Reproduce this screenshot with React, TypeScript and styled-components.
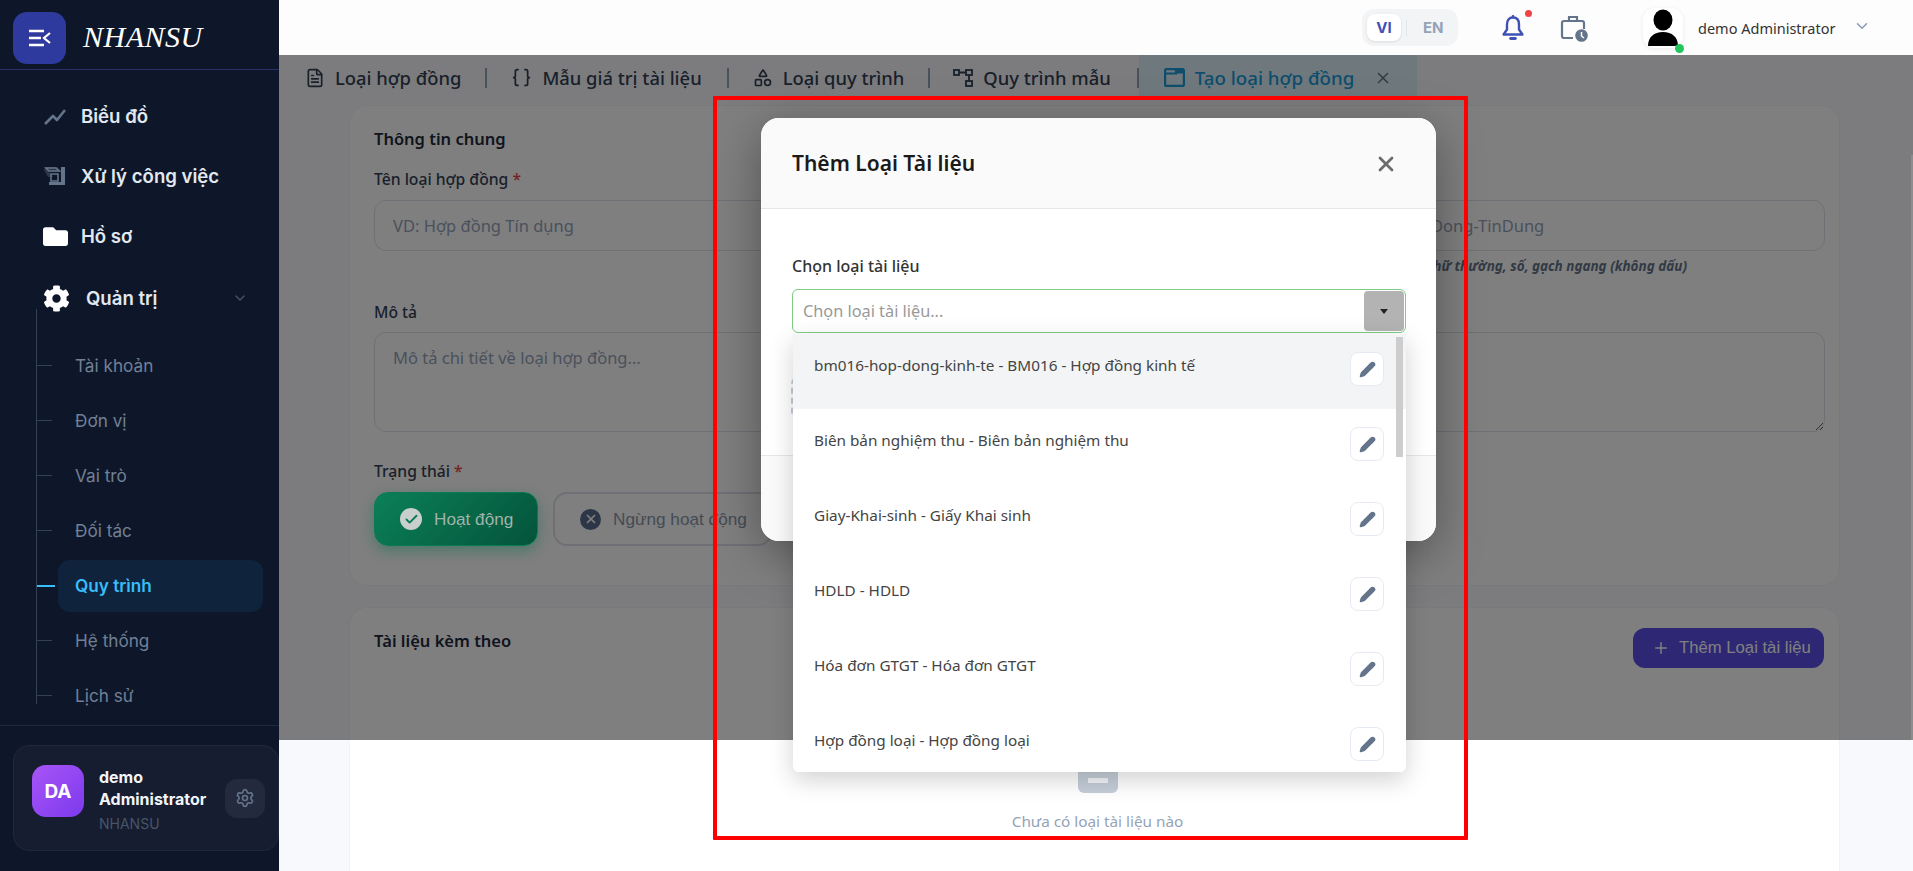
import styled, { createGlobalStyle } from "styled-components";
import { Braces, ChevronDown, FileText, Pencil, Plus, Settings, Shapes, X, Check } from "lucide-react";
import { FaCog, FaFolder } from "react-icons/fa";

const UI_FONT = `"Noto Sans", "Open Sans", sans-serif`;
const NAV_FONT = `Inter, "Noto Sans", sans-serif`;
const BTN_FONT = `"Liberation Sans", Arial, sans-serif`;

const GlobalStyle = createGlobalStyle`
  * { box-sizing: border-box; }
  html, body { margin: 0; padding: 0; height: 100%; overflow: hidden; }
  body { font-family: ${UI_FONT}; background: #f8f9fd; }
`;

const subItems = ["Tài khoản", "Đơn vị", "Vai trò", "Đối tác", "Quy trình", "Hệ thống", "Lịch sử"];

const docTypes = [
  "bm016-hop-dong-kinh-te - BM016 - Hợp đồng kinh tế",
  "Biên bản nghiệm thu - Biên bản nghiệm thu",
  "Giay-Khai-sinh - Giấy Khai sinh",
  "HDLD - HDLD",
  "Hóa đơn GTGT - Hóa đơn GTGT",
  "Hợp đồng loại - Hợp đồng loại",
];

const Shell = styled.div`
  display: flex;
  height: 871px;
  width: 1913px;
  overflow: hidden;
  position: relative;
`;

/* sidebar */
const Sidebar = styled.aside`
  width: 279px;
  flex: none;
  background: #0e1729;
  display: flex;
  flex-direction: column;
  font-family: ${NAV_FONT};
`;

const Brand = styled.div`
  height: 70px;
  flex: none;
  display: flex;
  align-items: flex-start;
  padding: 12px 0 0 13px;
  gap: 17px;
  border-bottom: 1px solid #2a3066;
`;

const BrandButton = styled.div`
  width: 53px;
  height: 52px;
  border-radius: 14px;
  background: #2f3a9e;
  display: flex;
  align-items: center;
  justify-content: center;
`;

const BrandName = styled.div`
  font-family: "Liberation Serif", serif;
  font-style: italic;
  font-size: 30px;
  letter-spacing: 0.5px;
  line-height: 50px;
  color: #fff;
`;

const Nav = styled.nav`
  flex: 1;
  display: flex;
  flex-direction: column;
  padding-top: 16px;
`;

const NavItem = styled.div<{ $offset?: number }>`
  height: 60px;
  flex: none;
  display: flex;
  align-items: center;
  padding-left: 43px;
  margin-top: ${(p) => p.$offset ?? 0}px;
  color: #e2e8f0;
  font-size: 18.6px;
  font-weight: 600;
  position: relative;
`;

const NavIcon = styled.span<{ $width: number }>`
  width: ${(p) => p.$width}px;
  flex: none;
  display: flex;
  align-items: center;
`;

const NavChevron = styled.span`
  margin-left: 74px;
  display: flex;
  color: #475569;
`;

const SubList = styled.div`
  position: relative;
  margin: -19px 0 0 36px;
  padding-top: 29px;
  border-left: 1px solid #334155;
  height: 395px;
`;

const SubItem = styled.div<{ $active?: boolean }>`
  height: 55px;
  display: flex;
  align-items: center;
  position: relative;
  padding-left: 38px;
  font-size: 17.2px;
  font-weight: ${(p) => (p.$active ? 600 : 400)};
  color: ${(p) => (p.$active ? "#38bdf8" : "#718096")};

  &::before {
    content: "";
    position: absolute;
    left: 0;
    top: 27px;
    width: ${(p) => (p.$active ? 18 : 15)}px;
    height: ${(p) => (p.$active ? 2 : 1)}px;
    background: ${(p) => (p.$active ? "#38bdf8" : "#334155")};
  }

  ${(p) =>
    p.$active &&
    `
    &::after {
      content: "";
      position: absolute;
      left: 21px;
      top: 2px;
      width: 205px;
      height: 52px;
      border-radius: 12px;
      background: #0f233d;
      z-index: 0;
    }
  `}
`;

const SubLabel = styled.span`
  position: relative;
  z-index: 1;
`;

const UserFoot = styled.div`
  flex: none;
  height: 146px;
  border-top: 1px solid #1e293b;
  padding: 19px 0 0 13px;
`;

const UserCard = styled.div`
  height: 106px;
  background: #161d30;
  border: 1px solid #1e293b;
  border-radius: 16px;
  display: flex;
  align-items: center;
  padding-left: 18px;
`;

const UserAvatar = styled.div`
  width: 52px;
  height: 52px;
  margin-bottom: 14px;
  border-radius: 14px;
  background: linear-gradient(135deg, #a855f7, #7c3aed);
  color: #fff;
  font-weight: 700;
  font-size: 19px;
  display: flex;
  align-items: center;
  justify-content: center;
  flex: none;
`;

const UserText = styled.div`
  width: 126px;
  margin: 3px 0 0 15px;
  flex: none;
`;

const UserName = styled.div`
  font-size: 16px;
  font-weight: 700;
  line-height: 22px;
  color: #f1f5f9;
`;

const UserOrg = styled.div`
  font-size: 14px;
  line-height: 20px;
  margin-top: 4px;
  color: #475569;
`;

const GearButton = styled.div`
  width: 40px;
  height: 39px;
  border-radius: 12px;
  background: #232a3e;
  color: #64748b;
  display: flex;
  align-items: center;
  justify-content: center;
  flex: none;
`;

/* main */
const Main = styled.div`
  flex: 1;
  min-width: 0;
  position: relative;
  display: flex;
  flex-direction: column;
`;

const Topbar = styled.header`
  height: 55px;
  flex: none;
  background: #fdfdfd;
  display: flex;
  align-items: center;
  position: relative;
  z-index: 3;
  padding-left: 1083px;
`;

const LangSwitch = styled.div`
  width: 96px;
  height: 37px;
  background: #f3f4f6;
  border-radius: 12px;
  display: flex;
  align-items: center;
  padding-left: 5px;
  font-size: 15px;
  font-weight: 700;
  font-family: ${NAV_FONT};
`;

const LangOn = styled.div`
  width: 34px;
  height: 27px;
  background: #fff;
  border-radius: 8px;
  box-shadow: 0 1px 3px rgba(0, 0, 0, 0.1);
  color: #3f51b5;
  display: flex;
  align-items: center;
  justify-content: center;
`;

const LangDivider = styled.span`
  width: 1px;
  height: 16px;
  background: #e2e5ea;
  margin-left: 5px;
`;

const LangOff = styled.span`
  color: #94a3b8;
  margin-left: 16px;
`;

const BellWrap = styled.div`
  margin-left: 44px;
  position: relative;
  display: flex;
  width: 58px;
`;

const RedDot = styled.span`
  position: absolute;
  left: 23px;
  top: -4px;
  width: 7px;
  height: 7px;
  border-radius: 50%;
  background: #ef4444;
`;

const ProfileAvatar = styled.div`
  margin-left: 55px;
  width: 40px;
  height: 40px;
  border-radius: 12px;
  background: #fff;
  box-shadow: 0 1px 5px rgba(0, 0, 0, 0.08);
  position: relative;
  display: flex;
  align-items: center;
  justify-content: center;
`;

const OnlineDot = styled.span`
  position: absolute;
  right: -1px;
  bottom: -5px;
  width: 9px;
  height: 9px;
  border-radius: 50%;
  background: #22c55e;
`;

const ProfileName = styled.div`
  margin-left: 15px;
  font-size: 14.5px;
  color: #333;
  width: 155px;
`;

const ProfileChevron = styled.span`
  display: flex;
  color: #8a9ab5;
  margin-top: -3px;
`;

const Tabs = styled.div`
  height: 45px;
  flex: none;
  display: flex;
  align-items: center;
  padding-left: 26px;
  background: #f8f9fd;
`;

const Tab = styled.div`
  height: 45px;
  display: flex;
  align-items: center;
  gap: 10px;
  font-size: 18.4px;
  font-weight: 500;
  color: #334155;
  svg {
    flex: none;
  }
`;

const ActiveTab = styled(Tab)`
  width: 278px;
  padding-left: 25px;
  font-size: 18.7px;
  color: #1a9dd9;
  background: #dff0fb;
`;

const TabSep = styled.span<{ $left: number; $right: number }>`
  width: 2px;
  height: 20px;
  background: #94a3b8;
  margin: 0 ${(p) => p.$right}px 0 ${(p) => p.$left}px;
  flex: none;
`;

const TabClose = styled.span`
  display: flex;
  color: #64748b;
  margin-left: 10px;
`;

const Content = styled.div`
  flex: 1;
  padding: 5px 73px 0 70px;
  display: flex;
  flex-direction: column;
  gap: 21px;
  background: #f8f9fd;
`;

const Card = styled.section`
  background: #fff;
  border: 1px solid #f1f3f8;
  border-radius: 18px;
  padding: 21px 15px 0 24px;
`;

const InfoCard = styled(Card)`
  height: 481px;
`;

const DocsCard = styled(Card)`
  flex: 1;
  position: relative;
  border-bottom: none;
  border-radius: 18px 18px 0 0;
  padding-top: 20px;
`;

const CardTitle = styled.h3`
  margin: 0;
  font-size: 16.5px;
  line-height: 24px;
  font-weight: 600;
  color: #1e293b;
`;

const FieldRow = styled.div`
  display: grid;
  grid-template-columns: 961px 490px;
  column-gap: 0;
  margin-top: 17px;
  height: 133px;
`;

const FieldLabel = styled.label`
  display: block;
  font-size: 15.7px;
  line-height: 22px;
  font-weight: 500;
  color: #334155;
  margin-bottom: 9px;
`;

const Required = styled.span`
  color: #ef4444;
`;

const TextInput = styled.div`
  height: 51px;
  margin-top: 10px;
  border: 1px solid #dbe1ea;
  border-radius: 12px;
  padding: 0 18px;
  display: flex;
  align-items: center;
  font-size: 16.5px;
  color: #94a3b8;
  white-space: nowrap;
`;

const RightInput = styled(TextInput)`
  padding-left: 32px;
`;

const Hint = styled.div`
  font-size: 13.5px;
  font-style: italic;
  font-weight: 700;
  color: #64748b;
  margin-top: 6px;
  text-align: right;
  padding-right: 138px;
  white-space: nowrap;
`;

const TextArea = styled.textarea`
  display: block;
  width: 1451px;
  height: 100px;
  border: 1px solid #dbe1ea;
  border-radius: 12px;
  padding: 13px 18px;
  font-family: ${UI_FONT};
  font-size: 16.5px;
  outline: none;
  &::placeholder {
    color: #94a3b8;
  }
`;

const StatusGroup = styled.div`
  margin-top: 28px;
`;

const StatusRow = styled.div`
  display: flex;
  gap: 15px;
  margin-top: 10px;
`;

const StatusActive = styled.div`
  position: relative;
  z-index: 3;
  width: 164px;
  height: 54px;
  border-radius: 14px;
  background: linear-gradient(135deg, #0b8058, #04533a);
  border: 1px solid #0b7a54;
  box-shadow: 0 5px 14px rgba(8, 110, 75, 0.45);
  display: flex;
  align-items: center;
  padding-left: 25px;
  gap: 12px;
  font-family: ${BTN_FONT};
  font-size: 17.2px;
  color: #9fb4aa;
`;

const CheckDot = styled.span`
  width: 22px;
  height: 22px;
  border-radius: 50%;
  background: #c9cfcc;
  color: #0a7a52;
  display: flex;
  align-items: center;
  justify-content: center;
`;

const StatusIdle = styled.div`
  width: 219px;
  height: 54px;
  border-radius: 14px;
  border: 2px solid #dde1ea;
  display: flex;
  align-items: center;
  padding-left: 25px;
  gap: 12px;
  font-family: ${BTN_FONT};
  font-size: 17.2px;
  color: #8a96aa;
`;

const CrossDot = styled.span`
  width: 21px;
  height: 21px;
  border-radius: 50%;
  background: #5a6d8c;
  color: #fff;
  display: flex;
  align-items: center;
  justify-content: center;
`;

const DocsHead = styled.div`
  display: flex;
  justify-content: space-between;
  align-items: flex-start;
`;

const AddButton = styled.div`
  width: 191px;
  height: 40px;
  border-radius: 12px;
  background: #5b4fe8;
  color: #fff;
  display: flex;
  align-items: center;
  padding-left: 19px;
  gap: 9px;
  font-family: ${BTN_FONT};
  font-size: 16.7px;
`;

const DocsHeadTitle = styled(CardTitle)`
  margin-top: 1px;
`;

const EmptyState = styled.div`
  position: absolute;
  left: 0;
  right: 0;
  top: 170px;
  display: flex;
  flex-direction: column;
  align-items: center;
  transform: translateX(3px);
`;

const EmptyIcon = styled.div`
  width: 40px;
  height: 40px;
  border-radius: 0 0 6px 6px;
  background: #c5ced9;
  display: flex;
  align-items: flex-end;
  justify-content: center;
  padding-bottom: 10px;
  margin-top: -25px;
`;

const EmptyBar = styled.span`
  width: 20px;
  height: 5px;
  background: #f1f4f7;
`;

const EmptyText = styled.div`
  margin-top: 18px;
  font-size: 15.3px;
  color: #94a3b8;
`;

/* dimming layer, stops short of the window as in the captured page */
const Backdrop = styled.div`
  position: absolute;
  left: 0;
  right: 0;
  top: 0;
  height: 740px;
  background: rgba(0, 0, 0, 0.5);
  z-index: 2;
`;

const EdgeThumb = styled.span`
  position: absolute;
  right: 0;
  top: 155px;
  width: 2px;
  height: 585px;
  background: #8d8d8d;
  z-index: 3;
`;

const Modal = styled.div`
  position: absolute;
  left: 482px;
  top: 118px;
  width: 675px;
  height: 423px;
  z-index: 4;
  background: #fff;
  border-radius: 18px;
  box-shadow: 0 12px 48px rgba(0, 0, 0, 0.35);
  display: flex;
  flex-direction: column;
`;

const ModalHead = styled.div`
  height: 91px;
  flex: none;
  background: #fafafa;
  border-bottom: 1px solid #e5e7eb;
  border-radius: 18px 18px 0 0;
  display: flex;
  align-items: center;
  justify-content: space-between;
  padding: 0 38px 1px 31px;
`;

const ModalTitle = styled.h2`
  margin: 0;
  font-size: 21px;
  font-weight: 600;
  color: #1a1a1a;
`;

const ModalClose = styled.span`
  display: flex;
  margin-top: 2px;
  color: #6b6b6b;
`;

const ModalBody = styled.div`
  flex: 1;
  padding: 45px 30px 0 31px;
`;

const SelectLabel = styled.div`
  font-size: 16px;
  line-height: 24px;
  font-weight: 500;
  color: #333;
  margin-bottom: 11px;
`;

const SelectBox = styled.div`
  height: 44px;
  border: 1px solid #7dcd85;
  border-radius: 6px;
  display: flex;
  align-items: center;
  justify-content: space-between;
  padding: 0 1px 0 10px;
  font-size: 16.3px;
  color: #999;
`;

const SelectArrow = styled.span`
  width: 40px;
  height: 40px;
  background: #b3b3b3;
  border-radius: 4px;
  display: flex;
  align-items: center;
  justify-content: center;

  &::after {
    content: "";
    border-left: 4px solid transparent;
    border-right: 4px solid transparent;
    border-top: 5px solid #222;
  }
`;

const DashedBox = styled.div`
  margin: 43px 0 0 -1px;
  height: 44px;
  border: 2px dashed #c5ccd6;
  border-radius: 8px;
`;

const ModalFoot = styled.div`
  height: 86px;
  flex: none;
  background: #fafafa;
  border-top: 1px solid #e5e7eb;
  border-radius: 0 0 18px 18px;
`;

const Dropdown = styled.div`
  position: absolute;
  left: 514px;
  top: 334px;
  width: 613px;
  height: 438px;
  z-index: 5;
  background: #fff;
  border-radius: 0 0 6px 6px;
  box-shadow: 0 8px 24px rgba(0, 0, 0, 0.18);
  overflow: hidden;
`;

const DropRow = styled.div<{ $hover?: boolean }>`
  height: 75px;
  display: flex;
  justify-content: space-between;
  align-items: flex-start;
  padding: 18px 22px 0 21px;
  background: ${(p) => (p.$hover ? "#f3f4f5" : "#fff")};
  font-size: 15.3px;
  line-height: 22px;
  color: #444;
`;

const DropText = styled.span`
  margin-top: 2px;
`;

const EditButton = styled.span`
  width: 34px;
  height: 34px;
  flex: none;
  background: #fff;
  border: 1px solid #e6ebf3;
  border-radius: 8px;
  color: #64748b;
  display: flex;
  align-items: center;
  justify-content: center;
`;

const DropThumb = styled.span`
  position: absolute;
  right: 3px;
  top: 3px;
  width: 7px;
  height: 120px;
  background: #cdcdcd;
`;

/* red annotation drawn over the capture */
const Annotation = styled.div`
  position: absolute;
  left: 434px;
  top: 96px;
  width: 755px;
  height: 744px;
  border: 4px solid #ff0000;
  border-radius: 1px;
  z-index: 6;
  pointer-events: none;
`;

const MenuToggleIcon = () => (
  <svg width="24" height="18" viewBox="0 0 24 18" fill="none" stroke="#fff" strokeWidth="2.4">
    <path d="M1 2h15M1 9h12M1 16h15" />
    <path d="M22 4l-6 5 6 5" stroke="#fff" strokeWidth="2.2" />
  </svg>
);

const ChartIcon = () => (
  <svg width="24" height="24" viewBox="0 0 24 24" fill="none" stroke="#64748b" strokeWidth="2.6">
    <path d="M2 20l8-8 4 4 8-10" strokeLinejoin="round" />
  </svg>
);

const TaskIcon = () => (
  <svg width="24" height="20" viewBox="0 0 24 20" fill="#64748b">
    <path d="M2 1h12l5 4v1H6l4 5H5L1 4z" fillOpacity=".35" />
    <path d="M3 2h10l3 3H6zM8 8h7v7H8z" fill="none" stroke="#64748b" strokeWidth="1.6" />
    <path d="M18 1h4v18H6v-3h12z" />
  </svg>
);

const BellIcon = () => (
  <svg width="22" height="27" viewBox="0 0 22 27" fill="none" stroke="#3f51b5" strokeWidth="2.4">
    <path d="M11 3.5c-4 0-6 3-6 7v5l-3.4 5h18.800l-3.400-5v-5c0-4-2-7-6-7z" strokeLinejoin="round" />
    <circle cx="11" cy="2.400" r="1.400" fill="#3f51b5" stroke="none" />
    <path d="M8.600 24.500h4.800" strokeLinecap="round" strokeWidth="2.800" />
  </svg>
);

const CaseClockIcon = () => (
  <svg width="28" height="28" viewBox="0 0 28 28" fill="none" stroke="#64748b" strokeWidth="2.200">
    <path d="M13 24H4a2 2 0 0 1-2-2V9a2 2 0 0 1 2-2h18a2 2 0 0 1 2 2v6" />
    <path d="M9 7V3h8v4" />
    <circle cx="21.500" cy="21.500" r="6.300" fill="#64748b" stroke="none" />
    <path d="M21.500 18v4l2.500 2" stroke="#fff" strokeWidth="1.500" />
  </svg>
);

const PersonIcon = () => (
  <svg width="32" height="38" viewBox="0 0 32 38" fill="#000">
    <ellipse cx="16" cy="11" rx="9.500" ry="10.500" />
    <path d="M1 37c0-9 6-14 15-14s15 5 15 14z" />
  </svg>
);

const NodesIcon = () => (
  <svg width="20" height="20" viewBox="0 0 20 20" fill="none" stroke="currentColor" strokeWidth="1.800">
    <rect x="1" y="2" width="5" height="5" />
    <rect x="13" y="2" width="6" height="5" />
    <rect x="13" y="13" width="6" height="5" />
    <path d="M6 4.500h7M16 7v6" />
  </svg>
);

const WindowIcon = () => (
  <svg width="21" height="19" viewBox="0 0 21 19" fill="none" stroke="currentColor" strokeWidth="2.200">
    <rect x="1.100" y="1.100" width="18.800" height="16.800" rx="1.500" />
    <path d="M1 5.500h11V1.500h7.500" />
    <path d="M12 1.500h7.500v4H12z" fill="currentColor" stroke="none" />
  </svg>
);

export default function App() {
  return (
    <>
      <GlobalStyle />
      <Shell>
        <Sidebar>
          <Brand>
            <BrandButton>
              <MenuToggleIcon />
            </BrandButton>
            <BrandName>NHANSU</BrandName>
          </Brand>
          <Nav>
            <NavItem>
              <NavIcon $width={38}>
                <ChartIcon />
              </NavIcon>
              Biểu đồ
            </NavItem>
            <NavItem>
              <NavIcon $width={38}>
                <TaskIcon />
              </NavIcon>
              Xử lý công việc
            </NavItem>
            <NavItem>
              <NavIcon $width={38}>
                <FaFolder size={25} color="#fff" />
              </NavIcon>
              Hồ sơ
            </NavItem>
            <NavItem $offset={2}>
              <NavIcon $width={43}>
                <FaCog size={27} color="#fff" />
              </NavIcon>
              Quản trị
              <NavChevron>
                <ChevronDown size={16} />
              </NavChevron>
            </NavItem>
            <SubList>
              {subItems.map((item) => (
                <SubItem key={item} $active={item === "Quy trình"}>
                  <SubLabel>{item}</SubLabel>
                </SubItem>
              ))}
            </SubList>
          </Nav>
          <UserFoot>
            <UserCard>
              <UserAvatar>DA</UserAvatar>
              <UserText>
                <UserName>demo Administrator</UserName>
                <UserOrg>NHANSU</UserOrg>
              </UserText>
              <GearButton>
                <Settings size={20} />
              </GearButton>
            </UserCard>
          </UserFoot>
        </Sidebar>

        <Main>
          <Topbar>
            <LangSwitch>
              <LangOn>VI</LangOn>
              <LangDivider />
              <LangOff>EN</LangOff>
            </LangSwitch>
            <BellWrap>
              <BellIcon />
              <RedDot />
            </BellWrap>
            <CaseClockIcon />
            <ProfileAvatar>
              <PersonIcon />
              <OnlineDot />
            </ProfileAvatar>
            <ProfileName>demo Administrator</ProfileName>
            <ProfileChevron>
              <ChevronDown size={18} />
            </ProfileChevron>
          </Topbar>

          <Tabs>
            <Tab>
              <FileText size={20} />
              Loại hợp đồng
            </Tab>
            <TabSep $left={24} $right={24} />
            <Tab>
              <Braces size={21} />
              Mẫu giá trị tài liệu
            </Tab>
            <TabSep $left={25} $right={24} />
            <Tab>
              <Shapes size={20} />
              Loại quy trình
            </Tab>
            <TabSep $left={24} $right={23} />
            <Tab>
              <NodesIcon />
              Quy trình mẫu
            </Tab>
            <TabSep $left={26} $right={0} />
            <ActiveTab>
              <WindowIcon />
              Tạo loại hợp đồng
              <TabClose>
                <X size={18} />
              </TabClose>
            </ActiveTab>
          </Tabs>

          <Content>
            <InfoCard>
              <CardTitle>Thông tin chung</CardTitle>
              <FieldRow>
                <div>
                  <FieldLabel>
                    Tên loại hợp đồng <Required>*</Required>
                  </FieldLabel>
                  <TextInput>VD: Hợp đồng Tín dụng</TextInput>
                </div>
                <div>
                  <FieldLabel>
                    Mã loại <Required>*</Required>
                  </FieldLabel>
                  <RightInput>VD: HopDong-TinDung</RightInput>
                  <Hint>Chữ thường, số, gạch ngang (không dấu)</Hint>
                </div>
              </FieldRow>
              <FieldLabel>Mô tả</FieldLabel>
              <TextArea placeholder="Mô tả chi tiết về loại hợp đồng..." />
              <StatusGroup>
                <FieldLabel>
                  Trạng thái <Required>*</Required>
                </FieldLabel>
                <StatusRow>
                  <StatusActive>
                    <CheckDot>
                      <Check size={15} strokeWidth={3} />
                    </CheckDot>
                    Hoạt động
                  </StatusActive>
                  <StatusIdle>
                    <CrossDot>
                      <X size={14} strokeWidth={3} />
                    </CrossDot>
                    Ngừng hoạt động
                  </StatusIdle>
                </StatusRow>
              </StatusGroup>
            </InfoCard>
            <DocsCard>
              <DocsHead>
                <DocsHeadTitle>Tài liệu kèm theo</DocsHeadTitle>
                <AddButton>
                  <Plus size={18} />
                  Thêm Loại tài liệu
                </AddButton>
              </DocsHead>
              <EmptyState>
                <EmptyIcon>
                  <EmptyBar />
                </EmptyIcon>
                <EmptyText>Chưa có loại tài liệu nào</EmptyText>
              </EmptyState>
            </DocsCard>
          </Content>

          <Backdrop />
          <EdgeThumb />

          <Modal>
            <ModalHead>
              <ModalTitle>Thêm Loại Tài liệu</ModalTitle>
              <ModalClose>
                <X size={24} strokeWidth={2.8} />
              </ModalClose>
            </ModalHead>
            <ModalBody>
              <SelectLabel>Chọn loại tài liệu</SelectLabel>
              <SelectBox>
                Chọn loại tài liệu...
                <SelectArrow />
              </SelectBox>
              <DashedBox />
            </ModalBody>
            <ModalFoot />
          </Modal>

          <Dropdown>
            {docTypes.map((doc, i) => (
              <DropRow key={doc} $hover={i === 0}>
                <DropText>{doc}</DropText>
                <EditButton>
                  <Pencil size={17} fill="currentColor" />
                </EditButton>
              </DropRow>
            ))}
            <DropThumb />
          </Dropdown>

          <Annotation />
        </Main>
      </Shell>
    </>
  );
}
